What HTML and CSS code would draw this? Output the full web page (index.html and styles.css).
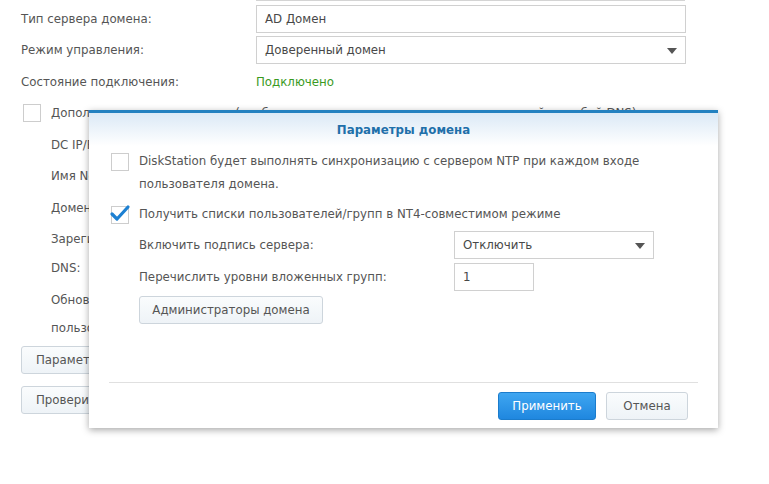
FILE: index.html
```html
<!DOCTYPE html>
<html lang="ru">
<head>
    <meta charset="UTF-8">
    <title>Домен/LDAP</title>
    <link rel="stylesheet" href="styles.css">
</head>
<body>
    <div class="page">
        <div class="stub"></div>
        <div class="row">
            <span class="row__label">Тип сервера домена:</span>
            <div class="field">AD Домен</div>
        </div>
        <div class="row">
            <span class="row__label">Режим управления:</span>
            <div class="field field--select">Доверенный домен<span class="arrow"></span></div>
        </div>
        <div class="row">
            <span class="row__label">Состояние подключения:</span>
            <span class="status">Подключено</span>
        </div>
        <div class="row">
            <span class="check"></span>
            <span class="check__text">Дополнительные параметры (требуется для контроллера домена с отдельной службой DNS)</span>
        </div>
        <div class="sub">
            <div class="row">DC IP/FQDN:</div>
            <div class="row">Имя NetBIOS:</div>
            <div class="row">Домен DNS:</div>
            <div class="row row--last">Зарегистр.:</div>
            <div class="line">DNS:</div>
            <div class="line line--gap">Обновлять списки</div>
            <div class="line">пользователей:</div>
        </div>
        <button class="button button--page">Параметры домена</button>
        <button class="button button--page button--second">Проверить подключение</button>
    </div>

    <div class="dialog">
        <div class="dialog__head">Параметры домена</div>
        <div class="dialog__body">
            <div class="opt">
                <span class="check"></span>
                <span class="opt__text">DiskStation будет выполнять синхронизацию с сервером NTP при каждом входе пользователя домена.</span>
            </div>
            <div class="opt opt--checked">
                <span class="check check--on">
                    <svg width="22" height="20" viewBox="0 0 22 20"><path d="M3 11 L8 16 L19 4" fill="none" stroke="#1d80d2" stroke-width="3.2" stroke-linecap="round" stroke-linejoin="round"/></svg>
                </span>
                <span class="opt__text">Получить списки пользователей/групп в NT4-совместимом режиме</span>
            </div>
            <div class="drow">
                <span class="drow__label">Включить подпись сервера:</span>
                <div class="field field--select field--short">Отключить<span class="arrow"></span></div>
            </div>
            <div class="drow">
                <span class="drow__label">Перечислить уровни вложенных групп:</span>
                <div class="field field--num">1</div>
            </div>
            <button class="button button--admins">Администраторы домена</button>
        </div>
        <div class="dialog__foot">
            <button class="button button--primary">Применить</button>
            <button class="button">Отмена</button>
        </div>
    </div>
</body>
</html>
```

FILE: styles.css
```css
body {
    margin: 0;
    background: #fff;
    font-family: 'DejaVu Sans', Verdana, sans-serif;
    font-size: 11.8px;
    color: #555;
    width: 769px;
    height: 484px;
    overflow: hidden;
    position: relative;
}

.page {
    padding-left: 21px;
}

.stub {
    margin-left: 235px;
    width: 429px;
    height: 0;
    border-top: 1px solid #d4d4d4;
    margin-bottom: 4px;
}

.row {
    display: flex;
    align-items: center;
    height: 27.5px;
    margin-bottom: 4px;
    white-space: nowrap;
}

.row--last {
    margin-bottom: 1px;
}

.row__label {
    width: 235px;
    flex: none;
}

.field {
    box-sizing: border-box;
    position: relative;
    width: 430px;
    height: 28px;
    border: 1px solid #d0d0d0;
    padding: 0 8px;
    display: flex;
    align-items: center;
    color: #484848;
    background: #fff;
}

.arrow {
    position: absolute;
    right: 8px;
    top: 11px;
    width: 0;
    height: 0;
    border-left: 5px solid transparent;
    border-right: 5px solid transparent;
    border-top: 6px solid #555;
}

.status {
    color: #3a9a1e;
}

.check {
    box-sizing: border-box;
    width: 18px;
    height: 18px;
    border: 1px solid #cdcdcd;
    background: #fff;
    flex: none;
    margin-left: 2px;
    position: relative;
}

.check svg {
    position: absolute;
    left: -3px;
    top: -4px;
}

.check__text {
    margin-left: 10px;
}

.sub {
    padding-left: 30px;
}

.line {
    height: 28px;
    line-height: 28px;
    white-space: nowrap;
}

.line--gap {
    margin-top: 4px;
}

.button {
    font-family: inherit;
    font-size: 11.8px;
    color: #555;
    height: 28px;
    padding: 0 14px;
    border: 1px solid #cdd5dc;
    border-radius: 3px;
    background: linear-gradient(#fafcfd, #eef3f7);
    cursor: pointer;
}

.button--page {
    display: block;
    margin-top: 4px;
    width: 190px;
    text-align: left;
}

.button--second {
    margin-top: 12px;
}

.dialog {
    position: absolute;
    left: 89px;
    top: 110px;
    width: 629px;
    height: 318px;
    box-sizing: border-box;
    background: #fff;
    border-top: 3px solid #2381c0;
    box-shadow: 0 2px 7px rgba(0, 0, 0, 0.35);
    display: flex;
    flex-direction: column;
}

.dialog__head {
    height: 33px;
    display: flex;
    align-items: center;
    justify-content: center;
    font-weight: bold;
    color: #1f70aa;
    background: linear-gradient(#dbe9f6, #fff);
}

.dialog__body {
    padding: 7px 0 0 22px;
    flex: 1;
}

.opt {
    display: flex;
    align-items: flex-start;
    margin-bottom: 10px;
}

.opt .check {
    margin-left: 0;
}

.opt__text {
    margin-left: 10px;
    line-height: 23px;
    margin-top: -3px;
    width: 540px;
}

.opt--checked {
    margin-bottom: 5px;
}

.drow {
    display: flex;
    align-items: center;
    margin-left: 28px;
    height: 28px;
    margin-bottom: 4px;
}

.drow__label {
    width: 315px;
    flex: none;
}

.field--short {
    width: 200px;
}

.field--num {
    width: 80px;
}

.button--admins {
    margin-left: 28px;
    margin-top: 1px;
    width: 184px;
    padding: 0;
}

.dialog__foot {
    margin: 0 20px;
    border-top: 1px solid #e0e0e0;
    height: 45px;
    display: flex;
    justify-content: flex-end;
    align-items: center;
    gap: 10px;
    padding-right: 10px;
}

.button--primary {
    color: #fff;
    border-color: #1b7ccc;
    background: linear-gradient(#3fa6f1, #1f87df);
    width: 98px;
    padding: 0;
}

.dialog__foot .button:last-child {
    width: 82px;
    padding: 0;
}
```
